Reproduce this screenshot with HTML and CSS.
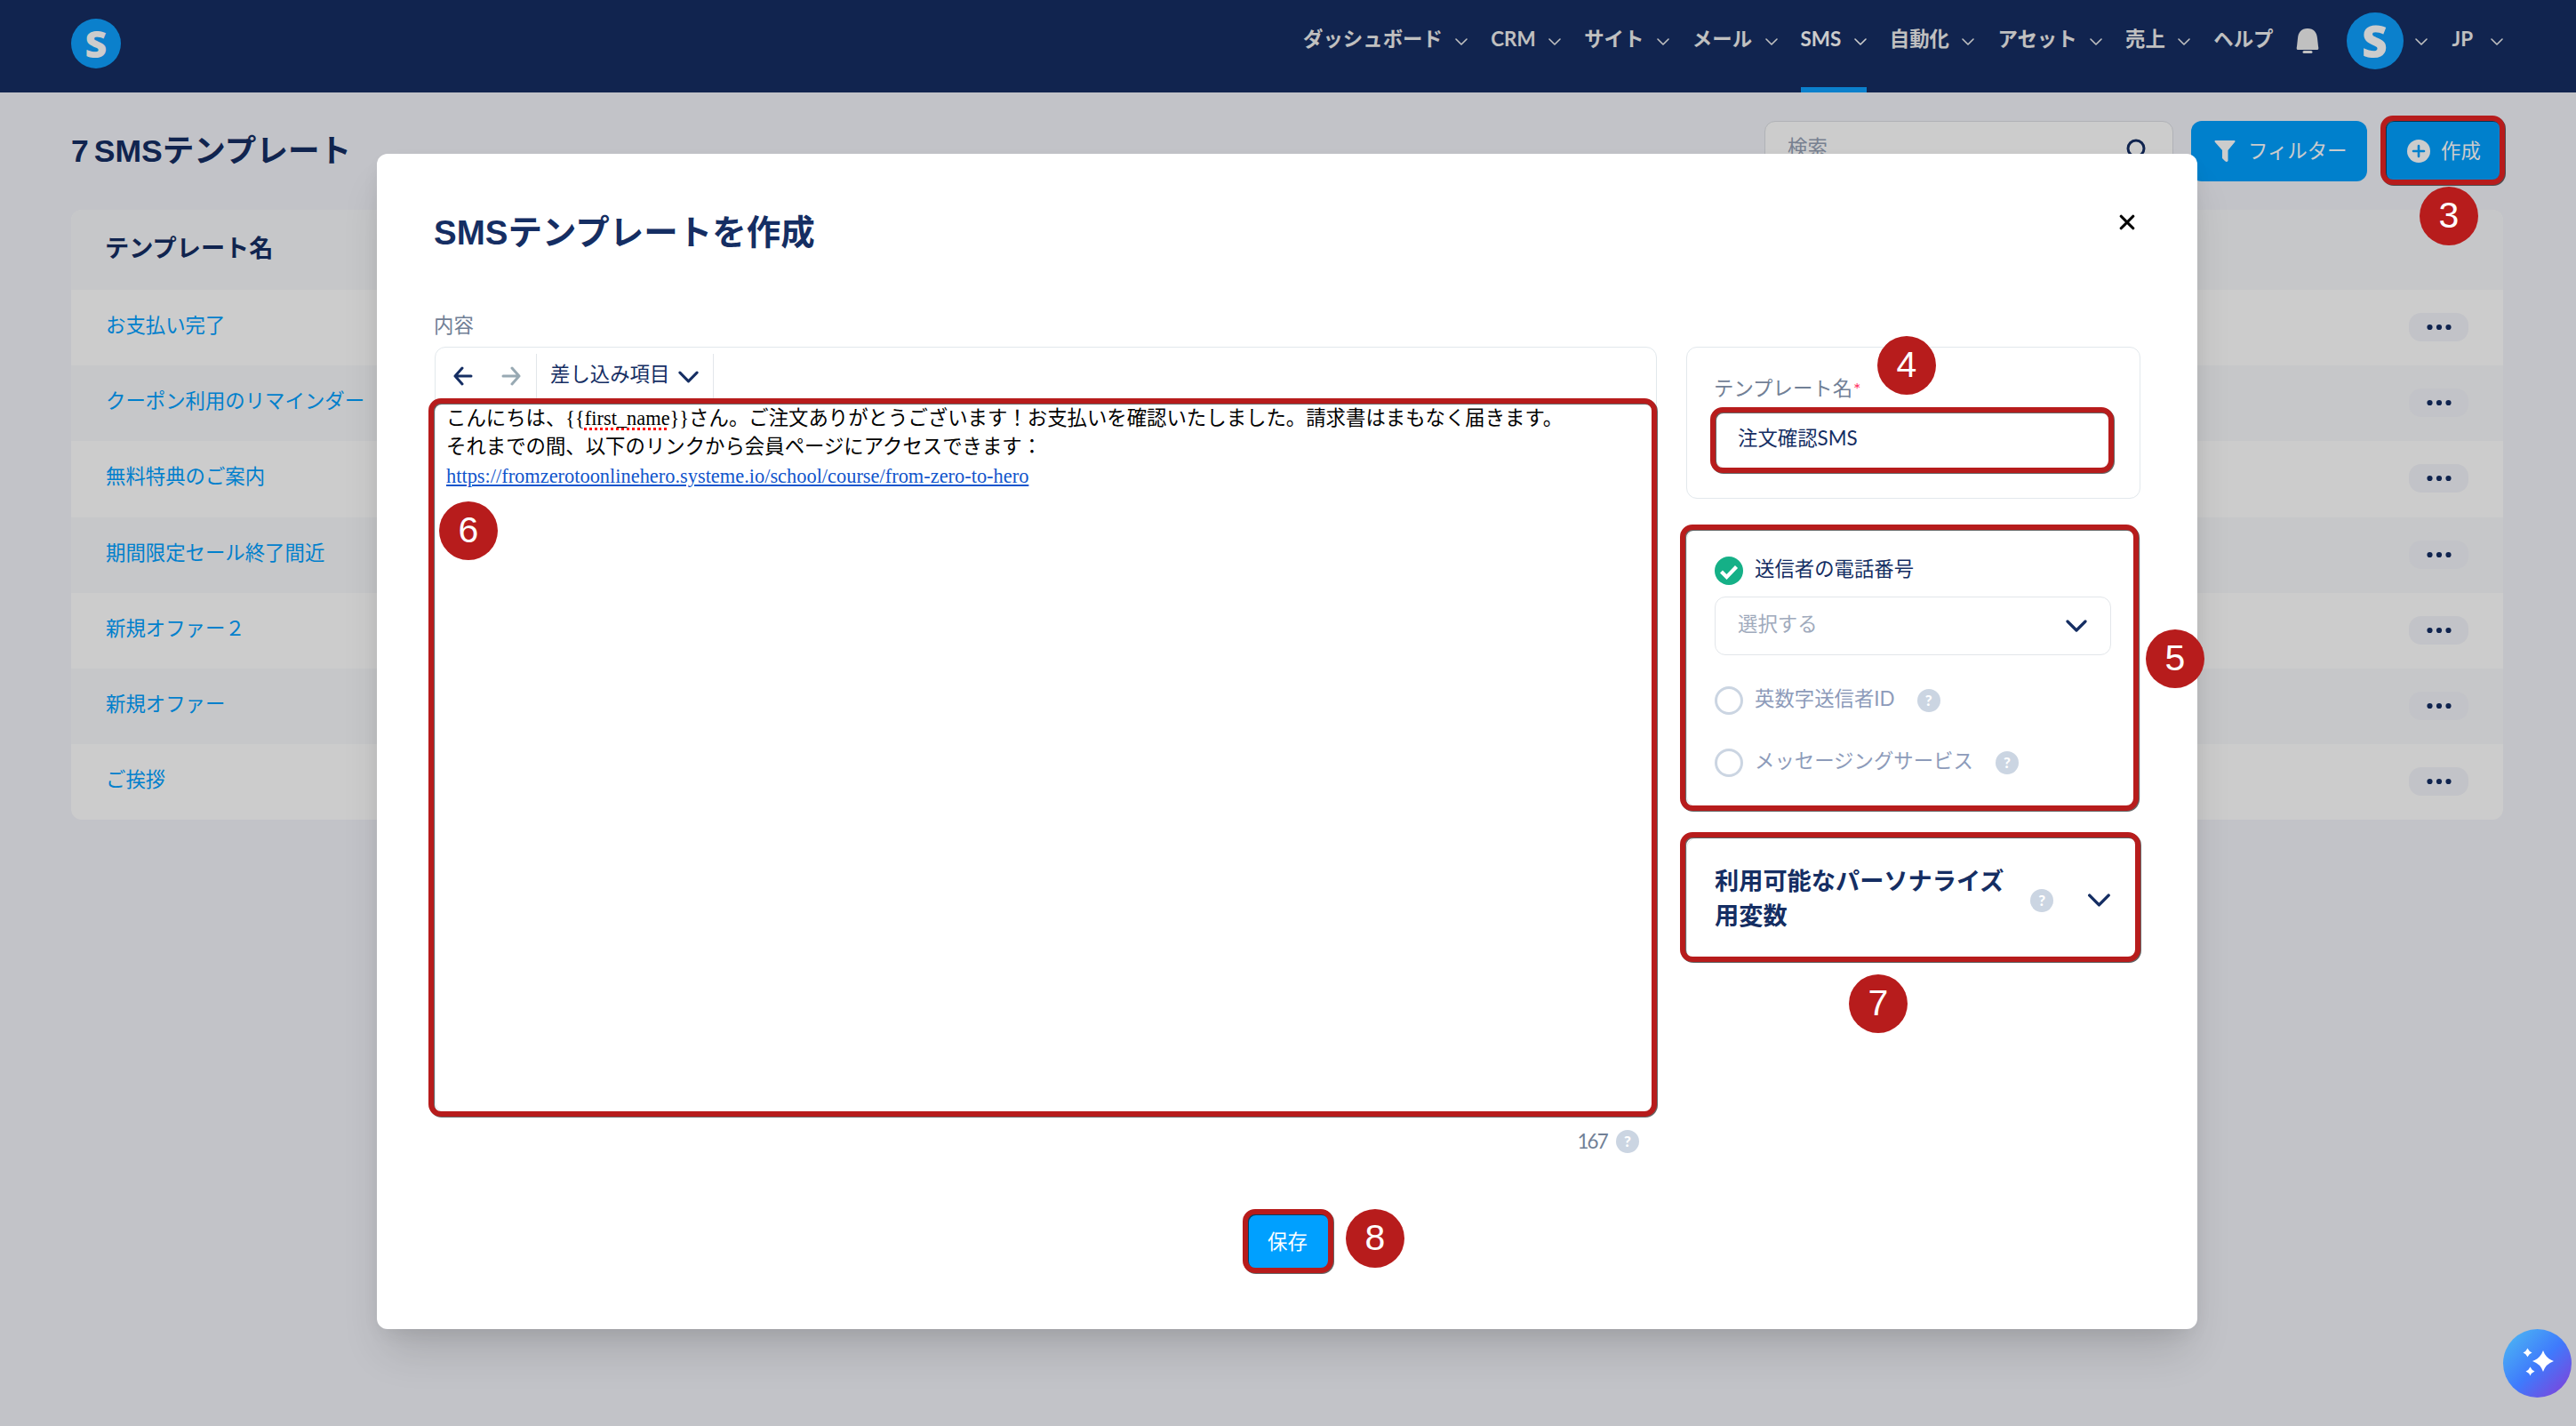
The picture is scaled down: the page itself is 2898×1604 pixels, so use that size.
FILE: index.html
```html
<!DOCTYPE html>
<html lang="ja">
  <head>
    <meta charset="utf-8">
    <title>SMSテンプレート</title>
    <link rel="stylesheet" href="styles.css">
  </head>
  <body>
    <!-- shared icons -->
    <svg class="icon-defs">
      <symbol id="chevron" viewBox="0 0 14 8"><path d="M1 1l6 6 6-6" fill="none" stroke="currentColor" stroke-width="1.6" stroke-linecap="round" stroke-linejoin="round"/></symbol>
      <symbol id="chevron-bold" viewBox="0 0 24 14"><path d="M2 2l10 10L22 2" fill="none" stroke="currentColor" stroke-width="3.2" stroke-linecap="round" stroke-linejoin="round"/></symbol>
      <symbol id="dots" viewBox="0 0 28 8"><circle cx="3.5" cy="4" r="3.1"/><circle cx="14" cy="4" r="3.1"/><circle cx="24.5" cy="4" r="3.1"/></symbol>
    </svg>

    <header class="navbar">
      <div class="logo">S</div>
      <nav>
        <a>ダッシュボード<svg class="caret"><use href="#chevron"/></svg></a>
        <a>CRM<svg class="caret"><use href="#chevron"/></svg></a>
        <a>サイト<svg class="caret"><use href="#chevron"/></svg></a>
        <a>メール<svg class="caret"><use href="#chevron"/></svg></a>
        <a class="active">SMS<svg class="caret"><use href="#chevron"/></svg></a>
        <a>自動化<svg class="caret"><use href="#chevron"/></svg></a>
        <a>アセット<svg class="caret"><use href="#chevron"/></svg></a>
        <a>売上<svg class="caret"><use href="#chevron"/></svg></a>
        <a>ヘルプ</a>
        <svg class="bell" viewBox="0 0 26 28"><path d="M13 0C6 0 2.500 4.500 2 11L1 20Q0 24 2 24H24Q26 24 25 20L24 11C23.500 4.500 20 0 13 0Z"/><rect x="7.500" y="25" width="11" height="3" rx="1.500"/></svg>
        <a class="account"><span class="avatar">S</span><svg class="caret"><use href="#chevron"/></svg></a>
        <a class="lang">JP<svg class="caret"><use href="#chevron"/></svg></a>
      </nav>
    </header>

    <main class="page">
      <div class="toolbar">
        <h1>7 SMSテンプレート</h1>
        <div class="search">
          <span>検索</span>
          <svg viewBox="0 0 26 26"><circle cx="11" cy="11" r="9" fill="none" stroke="currentColor" stroke-width="3"/><path d="M18 18l6 6" stroke="currentColor" stroke-width="3" stroke-linecap="round"/></svg>
        </div>
        <button class="btn filter">
          <svg width="24" height="24" viewBox="0 0 24 24"><path d="M1 0H23Q24 1 23 2L15.500 11V23Q14 25 12 23L9 20V11L1 2Q0 1 1 0Z" fill="currentColor"/></svg>
          フィルター
        </button>
        <button class="btn create">
          <svg width="26" height="26" viewBox="0 0 26 26"><circle cx="13" cy="13" r="13" fill="currentColor"/><path d="M13 7v12M7 13h12" stroke="#00a0ff" stroke-width="2.600" stroke-linecap="round"/></svg>
          作成
        </button>
      </div>

      <div class="table">
        <div class="row head">テンプレート名</div>
        <div class="row"><a>お支払い完了</a><span class="more"><svg><use href="#dots"/></svg></span></div>
        <div class="row"><a>クーポン利用のリマインダー</a><span class="more"><svg><use href="#dots"/></svg></span></div>
        <div class="row"><a>無料特典のご案内</a><span class="more"><svg><use href="#dots"/></svg></span></div>
        <div class="row"><a>期間限定セール終了間近</a><span class="more"><svg><use href="#dots"/></svg></span></div>
        <div class="row"><a>新規オファー２</a><span class="more"><svg><use href="#dots"/></svg></span></div>
        <div class="row"><a>新規オファー</a><span class="more"><svg><use href="#dots"/></svg></span></div>
        <div class="row"><a>ご挨拶</a><span class="more"><svg><use href="#dots"/></svg></span></div>
      </div>
    </main>

    <div class="overlay">
      <div class="modal">
        <div class="modal-head">
          <h2>SMSテンプレートを作成</h2>
          <svg class="close" viewBox="0 0 16 16"><path d="M2 2l12 12M14 2L2 14" stroke="#000" stroke-width="2.800" stroke-linecap="round"/></svg>
        </div>

        <div class="label">内容</div>
        <div class="columns">
          <div class="left">
            <div class="editor">
              <div class="editor-bar">
                <div class="history">
                  <svg viewBox="0 0 22 22"><path d="M20 11H2M10 2L2 11l8 9" fill="none" stroke="#152e63" stroke-width="3" stroke-linecap="round" stroke-linejoin="round"/></svg>
                  <svg viewBox="0 0 22 22"><path d="M2 11h18M12 2l8 9-8 9" fill="none" stroke="#98a9b3" stroke-width="3" stroke-linecap="round" stroke-linejoin="round"/></svg>
                </div>
                <div class="merge">差し込み項目<svg><use href="#chevron-bold"/></svg></div>
              </div>
              <div class="content">
                <p>こんにちは、{{<span class="typo">first_name</span>}}さん。ご注文ありがとうございます！お支払いを確認いたしました。請求書はまもなく届きます。</p>
                <p>それまでの間、以下のリンクから会員ページにアクセスできます：</p>
                <p class="url"><a>https://fromzerotoonlinehero.systeme.io/school/course/from-zero-to-hero</a></p>
              </div>
            </div>
            <div class="counter"><span class="count">167</span><span class="help">?</span></div>
          </div>

          <div class="right">
            <div class="card name">
              <div class="label">テンプレート名<span class="required">*</span></div>
              <div class="field">注文確認SMS</div>
            </div>
            <div class="card sender">
              <div class="option on">
                <svg viewBox="0 0 32 32"><circle cx="16" cy="16" r="16" fill="#15b087"/><path d="M7.500 17l6 6 11-11.500" fill="none" stroke="#fff" stroke-width="4.200"/></svg>
                <span class="text">送信者の電話番号</span>
              </div>
              <div class="field select">選択する<svg><use href="#chevron-bold"/></svg></div>
              <div class="option"><span class="radio"></span><span class="text">英数字送信者ID</span><span class="help">?</span></div>
              <div class="option"><span class="radio"></span><span class="text">メッセージングサービス</span><span class="help">?</span></div>
            </div>
            <div class="card variables">
              <h3>利用可能なパーソナライズ用変数</h3>
              <span class="help">?</span>
              <svg><use href="#chevron-bold"/></svg>
            </div>
          </div>
        </div>

        <button class="save">保存</button>
      </div>
    </div>

    <div class="ai">
      <svg viewBox="0 0 36 36"><path d="M23 3q3 9 12 12-9 3-12 12-3-9-12-12Q20 12 23 3ZM5.500 .5Q7 4 10.500 5.500 7 7 5.500 10.500 4 7 .5 5.500 4 4 5.500 .5ZM8.500 21.500q1.500 3.500 5 5-3.500 1.500-5 5-1.500-3.500-5-5 3.500-1.500 5-5Z" fill="#fff"/></svg>
    </div>

    <!-- step markers -->
    <div class="mark mark-create"></div>
    <div class="mark mark-name"></div>
    <div class="mark mark-sender"></div>
    <div class="mark mark-content"></div>
    <div class="mark mark-variables"></div>
    <div class="mark mark-save"></div>
    <div class="step step-3">3</div>
    <div class="step step-4">4</div>
    <div class="step step-5">5</div>
    <div class="step step-6">6</div>
    <div class="step step-7">7</div>
    <div class="step step-8">8</div>
  </body>
</html>
```
FILE: styles.css
```css
* {
  box-sizing: border-box;
}

body {
  background-color: #f3f4fa;
  color: #152e63;
  font-family: Lato, "Noto Sans CJK JP", sans-serif;
  font-size: 22.4px;
  line-height: 32px;
  margin: 0;
  height: 1604px;
  overflow: hidden;
  position: relative;
}

h1, h2, h3, p {
  margin: 0;
}

button {
  border: none;
  font: inherit;
}

.icon-defs {
  display: none;
}

/* top navigation */
.navbar {
  display: flex;
  justify-content: space-between;
  height: 104px;
  padding: 0 82px 0 80px;
  background-color: #162e63;
}

.logo, .avatar {
  display: flex;
  align-items: center;
  justify-content: center;
  border-radius: 50%;
  background-color: #0ea0ff;
  color: white;
  font-family: "Open Sans", sans-serif;
  font-weight: 800;
}

.logo {
  width: 56px;
  height: 56px;
  margin-top: 21px;
  font-size: 43px;
}

nav {
  display: flex;
  gap: 26px;
}

nav a {
  display: flex;
  align-items: center;
  gap: 14.5px;
  height: 104px;
  padding-bottom: 16px;
  color: #f0f0f0;
  font-weight: bold;
}

nav a.active {
  color: white;
  border-bottom: 6px solid #0ea0ff;
  padding-bottom: 10px;
}

.caret {
  width: 14px;
  height: 8px;
  margin-top: 5px;
}

.bell {
  width: 26px;
  height: 28px;
  margin: 32px 0 0 -1px;
  fill: #f0f0f0;
}

nav .account {
  gap: 13px;
  margin: 0 2px 0 5px;
}

.avatar {
  width: 64px;
  height: 64px;
  margin-top: 4px;
  font-size: 50px;
}

nav .lang {
  gap: 20px;
}

/* page behind the dialog */
.page {
  padding: 32px 82px 0 80px;
}

.toolbar {
  display: flex;
  align-items: center;
  height: 68px;
}

h1 {
  flex: 1;
  font-family: "Liberation Sans", "Noto Sans CJK JP", sans-serif;
  font-size: 35.6px;
  word-spacing: -4px;
}

.search {
  display: flex;
  align-items: center;
  justify-content: space-between;
  width: 460px;
  height: 68px;
  margin-right: 20px;
  padding: 0 26px 4px 25px;
  border: 1px solid #dcdfe5;
  border-radius: 12px;
  background-color: white;
}

.search span {
  color: #95a1b5;
  margin-top: -4px;
}

.search svg {
  width: 26px;
  height: 26px;
  margin-top: 2px;
}

.btn {
  display: flex;
  align-items: center;
  gap: 14px;
  height: 68px;
  padding: 0 0 0 26px;
  border-radius: 12px;
  background-color: #00a0ff;
  color: white;
  white-space: nowrap;
}

.filter {
  width: 198px;
  margin-right: 20px;
}

.create {
  width: 133px;
  padding: 0 0 0 25px;
  gap: 12px;
}

.table {
  margin-top: 32px;
  border-radius: 12px;
  background-color: white;
  overflow: hidden;
}

.row {
  display: flex;
  align-items: center;
  justify-content: space-between;
  height: 85.2px;
  padding: 0 39px 5px 39px;
}

.row:nth-child(odd) {
  background-color: #f8f9fc;
}

.row a {
  color: #00a0ff;
}

.row.head {
  height: 90px;
  padding-left: 38px;
  font-size: 27.2px;
  font-weight: bold;
}

.more {
  display: flex;
  align-items: center;
  justify-content: center;
  width: 67px;
  height: 32px;
  margin-top: 4px;
  border-radius: 14px;
  background-color: #f3f4fa;
}

.more svg {
  width: 28px;
  height: 8px;
  fill: #152e63;
}

/* dialog */
.overlay {
  position: absolute;
  top: 0;
  left: 0;
  width: 100%;
  height: 100%;
  padding: 173px 426px 0 424px;
  background-color: rgba(0, 0, 0, 0.2);
}

.modal {
  height: 1322px;
  padding: 64px 64px 0 65px;
  border-radius: 12px;
  background-color: white;
  box-shadow: 0 32px 50px -10px rgba(0, 0, 0, 0.14), 0 8px 24px -8px rgba(0, 0, 0, 0.1);
}

.modal-head {
  display: flex;
  justify-content: space-between;
  height: 113px;
}

h2 {
  font-family: "Liberation Sans", "Noto Sans CJK JP", sans-serif;
  font-size: 38.5px;
  line-height: 50px;
  margin-left: -1px;
}

.close {
  width: 18px;
  height: 18px;
  margin: 4px 6px 0 0;
}

.label {
  color: #718096;
  margin-left: -1px;
}

.columns {
  display: flex;
  justify-content: space-between;
  margin-top: 8px;
}

.left {
  width: 1375px;
}

.editor {
  height: 862px;
  border: 1px solid #e2e8ec;
  border-radius: 12px;
}

.editor-bar {
  display: flex;
  height: 60px;
  padding-top: 7px;
}

.history {
  display: flex;
  gap: 32px;
  width: 114px;
  padding: 14px 0 0 20px;
  border-right: 1px solid #e2e6ea;
}

.history svg {
  width: 22px;
  height: 22px;
}

.merge {
  display: flex;
  align-items: center;
  gap: 10px;
  width: 199px;
  padding: 0 0 8px 15px;
  border-right: 1px solid #e2e6ea;
}

.merge svg {
  width: 23px;
  height: 14px;
  margin-top: 6px;
}

.content {
  padding: 4px 12px;
  color: black;
  font-family: "Liberation Serif", "Noto Sans CJK JP", serif;
  white-space: nowrap;
}

.content a {
  color: #1155cc;
  text-decoration: underline;
}

.content .url {
  padding-top: 1px;
}

.typo {
  text-decoration: underline dotted red 3px;
  text-underline-offset: 3px;
}

.counter {
  display: flex;
  align-items: center;
  justify-content: flex-end;
  gap: 10px;
  margin-top: 16px;
  padding-right: 20px;
  color: #718096;
}

.count {
  letter-spacing: -1.8px;
}

.help {
  display: flex;
  align-items: center;
  justify-content: center;
  width: 26px;
  height: 26px;
  border-radius: 50%;
  background-color: #cbd5e2;
  color: white;
  font-size: 17px;
  font-weight: 900;
}

.right {
  display: flex;
  flex-direction: column;
  gap: 34px;
  width: 511px;
}

.card {
  padding: 0 32px 0 31px;
  border: 1px solid #e2e8ec;
  border-radius: 12px;
}

.name {
  height: 171px;
  padding-top: 30px;
}

.required {
  color: #ff3366;
  font-size: 20px;
  margin-left: 1px;
}

.field {
  display: flex;
  align-items: center;
  height: 66px;
  margin-top: 8px;
  padding: 0 26px 3px 25px;
  border: 1px solid #e2e6ea;
  border-radius: 12px;
}

.sender {
  height: 313px;
  padding-top: 30px;
}

.option {
  display: flex;
  align-items: center;
  gap: 13px;
  height: 32px;
  color: #8d9bba;
}

.option .text {
  margin-top: -4px;
}

.option.on {
  color: #152e63;
}

.option svg, .radio {
  width: 32px;
  height: 32px;
}

.radio {
  border: 3px solid #cbd5e2;
  border-radius: 50%;
}

.option .help {
  margin-left: 12px;
}

.select {
  justify-content: space-between;
  margin: 13px 0 35px;
  padding-bottom: 5px;
  color: #a0aabc;
}

.select svg {
  width: 24px;
  height: 14px;
  color: #152e63;
  margin-top: 5px;
}

.option + .option {
  margin-top: 38px;
}

.variables {
  display: flex;
  align-items: center;
  height: 141px;
}

h3 {
  width: 330px;
  margin: -6px 27px 0 0;
  font-size: 27.2px;
  line-height: 39px;
}

.variables svg {
  width: 27px;
  height: 15px;
  margin-left: 38px;
}

.save {
  display: block;
  width: 92px;
  height: 62px;
  margin: 65px auto 0;
  padding: 2px 0 0;
  background-color: #00a0ff;
  color: white;
}

/* assistant button */
.ai {
  position: absolute;
  display: flex;
  align-items: center;
  justify-content: center;
  left: 2816px;
  top: 1495px;
  width: 77px;
  height: 77px;
  border-radius: 50%;
  background-image: linear-gradient(135deg, #49aaf5 15%, #3f7afc 52%, #7c45dc 92%);
}

.ai svg {
  width: 36px;
  height: 36px;
  margin-left: 2px;
}

/* step markers */
.mark {
  position: absolute;
  border: 6.500px solid #b71c1c;
  border-radius: 14px;
  filter: drop-shadow(1px 1px 0.5px rgba(0, 0, 0, 0.6));
}

.mark-create {
  left: 2678px;
  top: 130px;
  width: 140px;
  height: 78px;
}

.mark-name {
  left: 1924px;
  top: 458px;
  width: 454px;
  height: 74px;
}

.mark-sender {
  left: 1890px;
  top: 590px;
  width: 516px;
  height: 322px;
}

.mark-content {
  left: 482px;
  top: 448px;
  width: 1382px;
  height: 808px;
}

.mark-variables {
  left: 1890px;
  top: 936px;
  width: 518px;
  height: 146px;
}

.mark-save {
  left: 1398px;
  top: 1360px;
  width: 102px;
  height: 72px;
}

.step {
  position: absolute;
  width: 66px;
  height: 66px;
  border-radius: 50%;
  background-color: #b71c1c;
  color: white;
  font-family: "Liberation Sans", sans-serif;
  font-size: 41px;
  line-height: 64px;
  text-align: center;
}

.step-3 {
  left: 2722px;
  top: 210px;
}

.step-4 {
  left: 2112px;
  top: 378px;
}

.step-5 {
  left: 2414px;
  top: 708px;
}

.step-6 {
  left: 494px;
  top: 564px;
}

.step-7 {
  left: 2080px;
  top: 1096px;
}

.step-8 {
  left: 1514px;
  top: 1360px;
}
```
